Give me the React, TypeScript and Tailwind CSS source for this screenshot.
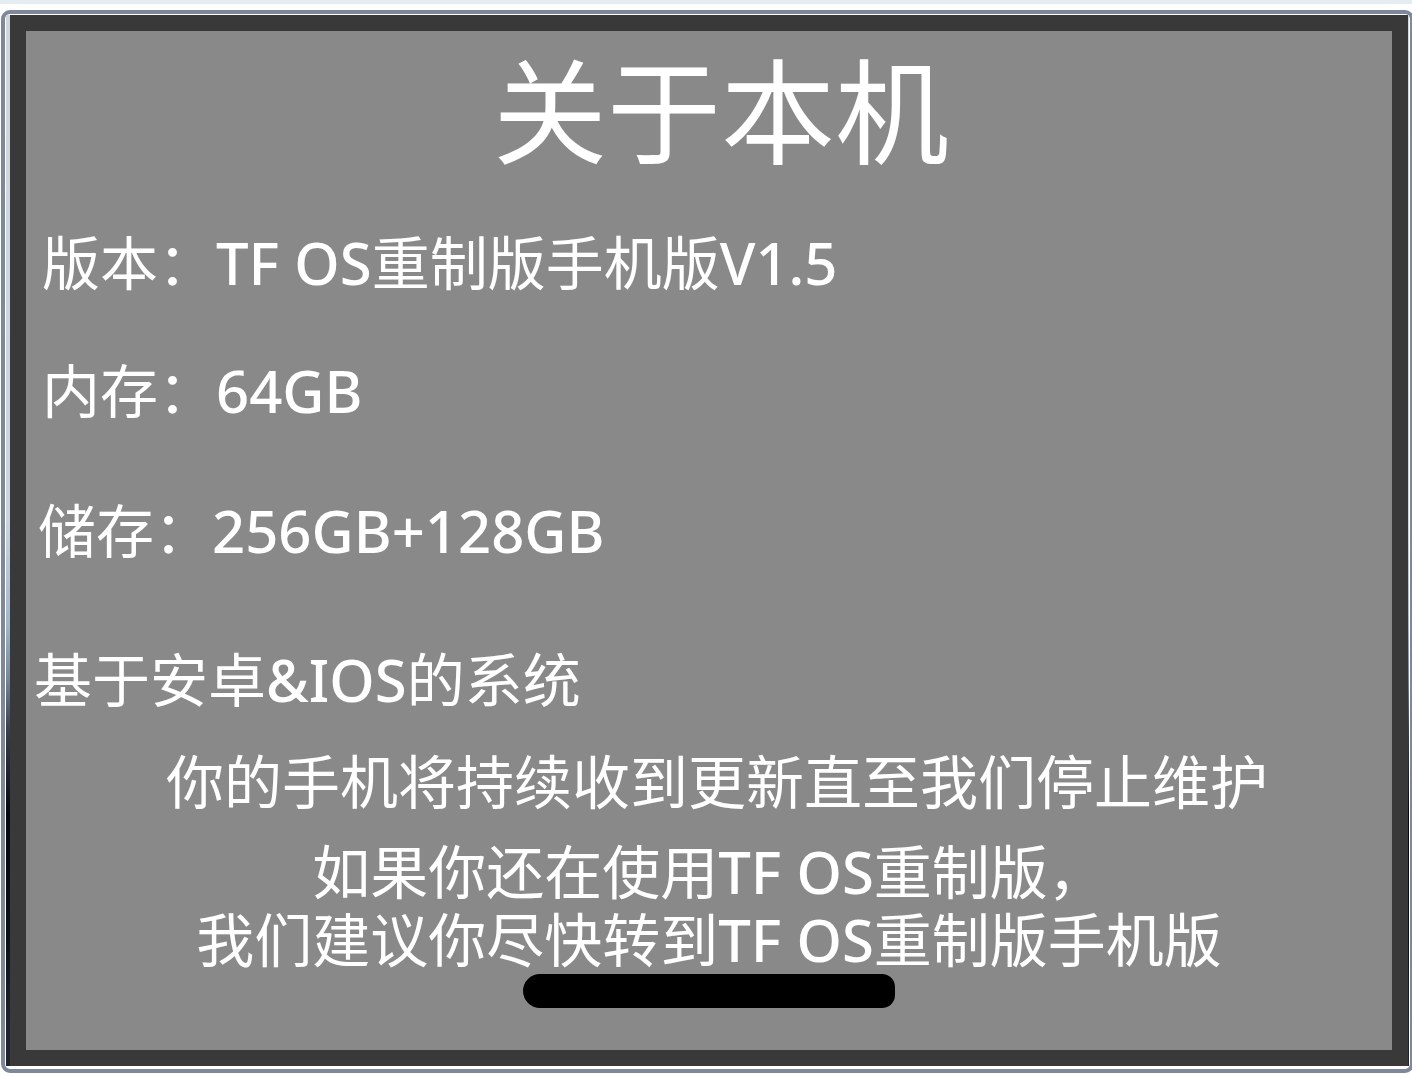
import type { ReactNode } from "react";

function Latin({ children }: { children: ReactNode }) {
  return <span className="font-medium">{children}</span>;
}

export default function App() {
  return (
    <div className="overflow-hidden bg-white pb-[5px]">
      <div className="h-1 bg-[#e6edf2]" />
      <div className="-mr-[2px] ml-px mt-[6px] rounded-[9px] border-4 border-[#7f879b] pb-[3px] pl-px pr-px pt-px">
        <div className="bg-[linear-gradient(to_bottom,#d0d8de_0%,#ccd5dc_48%,#a3b5cb_58%,#78899f_63%,#3a404c_68%,#07090f_76%,#0a1218_88%,#20242c_96%)] pl-1 pr-px">
          <main
            lang="zh-CN"
            className="border-16 border-[#393939] bg-[#898989] pb-[42px] pt-4 font-['Noto_Sans','Noto_Sans_CJK_SC',sans-serif] text-[58px] font-normal leading-[68px] text-white"
          >
            <h1 className="pl-6 text-center text-[114px] font-normal leading-[128px]">关于本机</h1>
            <div className="whitespace-nowrap pt-[54px]">
              <p className="pl-4">
                版本：<Latin>TF OS</Latin>重制版手机版<Latin>V1.5</Latin>
              </p>
              <p className="mt-[60px] pl-4">
                内存：<Latin>64GB</Latin>
              </p>
              <p className="mt-[72px] pl-3">
                储存：<Latin>256GB+128GB</Latin>
              </p>
              <p className="mt-[81px] pl-2">
                基于安卓<Latin>&amp;IOS</Latin>的系统
              </p>
            </div>
            <div className="whitespace-nowrap text-center">
              <p className="mt-[34px] pl-4">你的手机将持续收到更新直至我们停止维护</p>
              <p className="mt-[22px]">
                如果你还在使用<Latin>TF OS</Latin>重制版，
              </p>
              <p>
                我们建议你尽快转到<Latin>TF OS</Latin>重制版手机版
              </p>
            </div>
            <button
              type="button"
              aria-label="返回主屏幕"
              className="mx-auto block h-[34px] w-[372px] rounded-l-[17px] rounded-r-[13px] bg-black"
            />
          </main>
        </div>
      </div>
    </div>
  );
}
